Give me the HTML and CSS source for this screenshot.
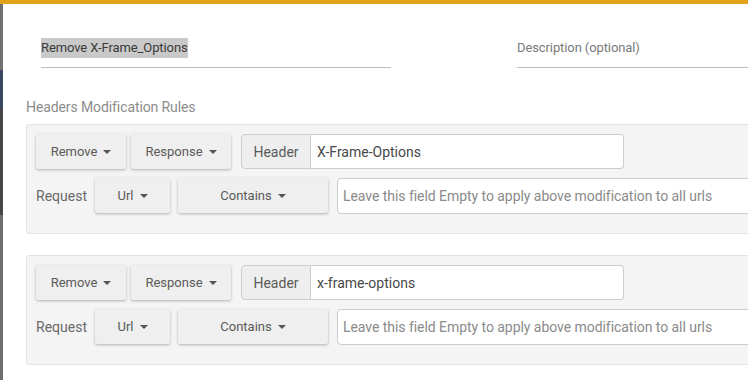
FILE: index.html
```html
<!doctype html>
<html>
<head>
<meta charset="utf-8">
<link rel="stylesheet" href="styles.css">
</head>
<body>
<div class="topbar"></div>
<div class="wrap">
	<div class="side"></div>
	<div class="modal">
		<div class="names">
			<div class="field name"><span class="sel">Remove X-Frame_Options</span></div>
			<div class="field desc">Description (optional)</div>
		</div>

		<h3 class="title">Headers Modification Rules</h3>

		<div class="rule">
			<div class="row">
				<button class="btn w90">Remove <i class="caret"></i></button>
				<button class="btn w100">Response <i class="caret"></i></button>
				<div class="group">
					<span class="addon">Header</span>
					<span class="input">X-Frame-Options</span>
				</div>
			</div>
			<div class="row">
				<span class="lbl">Request</span>
				<button class="btn w75">Url <i class="caret"></i></button>
				<button class="btn w150">Contains <i class="caret"></i></button>
				<span class="input url">Leave this field Empty to apply above modification to all urls</span>
			</div>
		</div>

		<div class="rule">
			<div class="row">
				<button class="btn w90">Remove <i class="caret"></i></button>
				<button class="btn w100">Response <i class="caret"></i></button>
				<div class="group">
					<span class="addon">Header</span>
					<span class="input">x-frame-options</span>
				</div>
			</div>
			<div class="row">
				<span class="lbl">Request</span>
				<button class="btn w75">Url <i class="caret"></i></button>
				<button class="btn w150">Contains <i class="caret"></i></button>
				<span class="input url">Leave this field Empty to apply above modification to all urls</span>
			</div>
		</div>
	</div>
</div>
</body>
</html>
```

FILE: styles.css
```css
*{margin:0; padding:0; box-sizing:border-box;}
body{
	font-family:Roboto, "Liberation Sans", sans-serif;
	background:#fff; width:748px; height:380px; overflow:hidden;
}
.topbar{height:4px; background:#e2a21c;}
.wrap{display:flex; height:376px;}
.side{
	width:3px; flex:none;
	background:linear-gradient(#707070 0, #707070 66px, #3b4763 66px, #3b4763 104px, #474747 104px, #474747 211px, #6e6e6e 211px);
}
.modal{flex:1; overflow:hidden; padding-left:23px;}

.names{display:flex; padding:29px 0 0 15px;}
.field{
	height:35px; border-bottom:1px solid #bdbdbd;
	font-size:13px; padding-top:7px; flex:none; letter-spacing:-0.1px;
}
.name{width:350px; color:#3a3a3a;}
.sel{background:#c9c9c9; padding:2px 0 3px;}
.desc{width:260px; margin-left:126px; color:#7a7a7a;}

.title{
	font-weight:normal; font-size:14px; color:#8c8c8c;
	margin:31px 0 9px; line-height:16px; letter-spacing:-0.1px;
}

.rule{
	width:740px; height:110px; margin-bottom:21px;
	background:#f4f4f4; border:1px solid #e3e3e3; border-radius:3px;
	padding:9px 0 0 9px;
}
.row{display:flex; align-items:center; height:35px;}
.row + .row{margin-top:9px;}

.btn{
	height:35px; border:none; border-radius:2px;
	background:#efefef; color:#5a5a5a;
	font:13px Roboto, "Liberation Sans", sans-serif;
	box-shadow:0 1px 3px rgba(0,0,0,.28);
	display:flex; align-items:center; justify-content:center;
	margin-right:5px;
}
.w90{width:90px;}
.w100{width:100px; margin-right:10px;}
.w75{width:75px; margin-right:8px;}
.w150{width:150px; margin-right:9px;}
.caret{
	display:inline-block; width:0; height:0; margin-left:6px;
	border-left:4px solid transparent; border-right:4px solid transparent;
	border-top:4px solid #555;
}

.group{display:flex; height:35px;}
.addon{
	width:70px; background:#eee; color:#5a5a5a;
	border:1px solid #ccc; border-radius:4px 0 0 4px;
	font-size:14px; display:flex; align-items:center; justify-content:center;
}
.input{
	background:#fff; border:1px solid #ccc; border-left:none;
	border-radius:0 4px 4px 0; width:313px;
	font-size:14px; color:#484848; display:flex; align-items:center; padding-left:6px;
}
.lbl{font-size:14px; color:#6a6a6a; width:59px;}
.url{
	height:36px; width:420px; border-left:1px solid #ccc; border-radius:4px;
	color:#8a8a8a; font-size:14px; padding-left:5px; letter-spacing:-0.05px;
}
```
